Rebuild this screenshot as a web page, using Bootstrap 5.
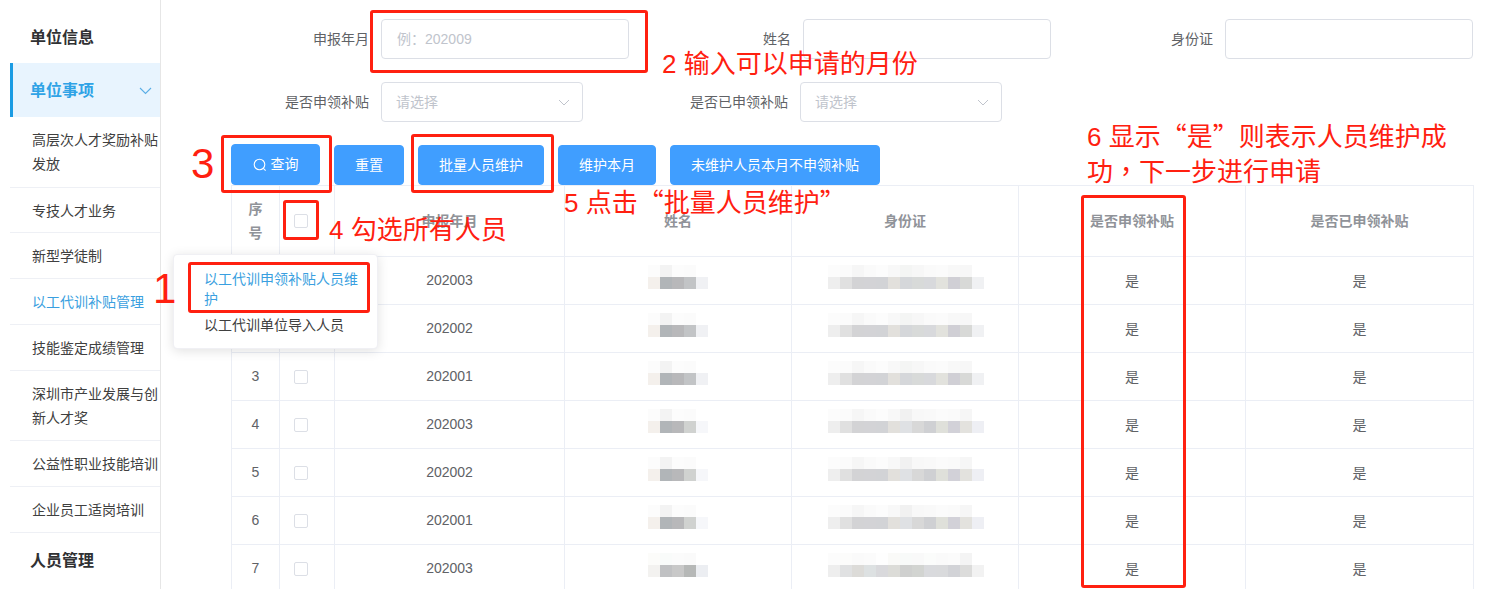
<!DOCTYPE html>
<html lang="zh-CN">
<head>
<meta charset="utf-8">
<title>以工代训申领补贴人员维护</title>
<link href="https://cdn.jsdelivr.net/npm/bootstrap@5.3.0/dist/css/bootstrap.min.css" rel="stylesheet">
<style>
html,body{height:589px;overflow:hidden}
body{font-family:"Liberation Sans","Noto Sans CJK SC",sans-serif;font-size:14px;color:#606266;background:#fff;position:relative}
.shell{height:589px}
.side{width:161px;flex:none;padding-left:10px;border-right:1px solid #e6e6e6}
.side-head{font-size:16px;font-weight:700;color:#303133;padding-left:20px;line-height:24px}
.side-head.first{height:63px;padding-top:26px}
.side-head.cur{height:54px;padding-top:2px;color:#2fa3e6;background:#e8f4fe;border-left:3px solid #1a9be3;padding-left:17px;padding-right:8px}
.side-head.last{padding-top:16px}
.side-sub{font-size:14px;line-height:24px;color:#404040;padding:11px 0 10px 22px;border-bottom:1px solid #eef0f5}
.side-sub.tallrow{padding-bottom:11px}
.side-sub.shortrow{padding-bottom:9px}
.side-sub.cur{color:#3a9fe0}
.work{flex:1;min-width:0;padding:19px 15px 0 50px}
.qgrid{display:grid;height:40px}
.qgrid.g1{grid-template-columns:170px 248px 174px 248px 174px 248px;margin-bottom:23px}
.qgrid.g2{grid-template-columns:170px 202px 217px 202px;margin-bottom:22px}
.qlabel{text-align:right;padding-right:12px;line-height:40px;color:#606266}
.qinput.form-control,.qinput.form-select{height:40px;font-size:14px;padding:0 15px;border:1px solid #dcdfe6;border-radius:4px;color:#606266;box-shadow:none}
.qinput::placeholder{color:#c0c4cc}
.qinput.form-select{padding-left:14px;color:#c0c4cc;background-image:url("data:image/svg+xml,%3Csvg xmlns='http://www.w3.org/2000/svg' viewBox='0 0 12 7'%3E%3Cpath d='M1 1l5 5 5-5' fill='none' stroke='%23c0c4cc'/%3E%3C/svg%3E");background-size:12px 7px;background-position:right 12px center}
.tools{margin-left:20px;gap:14px;height:41px}
.act.btn{--bs-btn-bg:#409eff;--bs-btn-border-color:#409eff;--bs-btn-color:#fff;--bs-btn-hover-bg:#409eff;--bs-btn-hover-border-color:#409eff;height:40px;font-size:14px;padding:0 20px;border-radius:4px;line-height:38px}
.act.tall{height:41px;width:89px;padding:0;line-height:39px}
.grid-wrap{margin-left:20px;width:1242px}
.gtable.table{table-layout:fixed;width:1242px;margin:0;--bs-border-color:#ebeef5;--bs-table-color:#606266;color:#606266}
.gtable th,.gtable td{text-align:center;vertical-align:middle;padding:0;border-color:#ebeef5}
.gtable th{height:71px;color:#909399;font-size:14px;font-weight:700;line-height:24px}
.gtable th.seq{padding:0 12px}
.gtable td{height:48px}
.gtable td.yn{padding-top:2px}
.gtable .tick-cell{line-height:0;text-align:left;padding-left:14px}
.tick.form-check-input{width:14px;height:14px;margin:0;border:1px solid #dcdfe6;border-radius:2px;display:inline-block;vertical-align:middle}
.name-blur,.id-blur{height:24px;margin:0 auto 8px;background-repeat:no-repeat;background-size:100% 12px;background-position:top,bottom}
.name-blur{width:60px;margin-left:83px;background-image:var(--t),var(--b);--t:linear-gradient(90deg,#fcfcfc 0 12px,#f3f3f3 0 24px,#fcfcfc 0 36px,#fbfbfb 0 48px,#fff 0)}
.id-blur{width:156px;margin-left:36px;background-image:var(--t),var(--b)}
.nb1{--b:linear-gradient(90deg,#f4f0ec 0 12px,#b1b5b8 0 24px,#b8b8ba 0 36px,#c2c4c6 0 48px,#f0f1f4 0)}
.nb2{--b:linear-gradient(90deg,#f4f0ec 0 12px,#b1b5b8 0 24px,#b8b8ba 0 36px,#d0d2d0 0 48px,#f6f7fa 0)}
.nb3{--t:linear-gradient(90deg,#fcfcfa 0 12px,#f9fbfa 0 24px,#fbfbfb 0 36px,#fafafa 0 48px,#fff 0);--b:linear-gradient(90deg,#f3f2f0 0 12px,#c0c1c3 0 24px,#c8c8c8 0 36px,#b6b8b7 0 48px,#eceef2 0)}
.ib1{--t:linear-gradient(90deg,#fcfcfc 0 12px,#fbfbfb 0 24px,#f6f6f6 0 36px,#fafafa 0 48px,#fcfcfc 0 60px,#f8f8f8 0 72px,#f4f5f4 0 84px,#f7f7f7 0 96px,#fafafa 0 108px,#fbfbfb 0 120px,#f8f8f8 0 132px,#f7f7f7 0 144px,#fff 0);--b:linear-gradient(90deg,#eee 0 12px,#e0e0e0 0 24px,#d3d3d5 0 36px,#d3d3d6 0 48px,#d2d3d6 0 60px,#e2e0dc 0 72px,#d5d7da 0 84px,#d8dad9 0 96px,#d8d9dc 0 108px,#e2e2dd 0 120px,#d0cfd5 0 132px,#d8d9d7 0 144px,#f0f1f3 0)}
.ib2{--t:linear-gradient(90deg,#fcfcfc 0 12px,#fbfbfb 0 24px,#f6f6f6 0 36px,#fafafa 0 48px,#fcfcfc 0 60px,#f8f8f8 0 72px,#f1f1f1 0 84px,#f8f8f8 0 96px,#f9f9f9 0 108px,#fbfbfb 0 120px,#fafafa 0 132px,#f6f6f6 0 144px,#fff 0);--b:linear-gradient(90deg,#eee 0 12px,#e0e0e0 0 24px,#d3d3d5 0 36px,#d3d3d6 0 48px,#d2d3d6 0 60px,#e2e0dc 0 72px,#dfe1e4 0 84px,#d8d8d8 0 96px,#cfd0d3 0 108px,#dfe0da 0 120px,#d2d1d8 0 132px,#e3e2de 0 144px,#eeeff4 0)}
.ib3{--t:linear-gradient(90deg,#fcfcfc 0 12px,#fcfcfb 0 24px,#fafafa 0 36px,#fbfbfb 0 48px,#fefefe 0 60px,#fafaf8 0 72px,#f8faf9 0 84px,#f9f9f9 0 96px,#fbfcfb 0 108px,#fafafa 0 120px,#fbfbfb 0 132px,#f4f4f4 0 144px,#fff 0);--b:linear-gradient(90deg,#eee 0 12px,#e0e1e2 0 24px,#dcdbd8 0 36px,#dde1e2 0 48px,#d9d9dc 0 60px,#dcdcd8 0 72px,#cfd0cf 0 84px,#d2d4d1 0 96px,#d9dadd 0 108px,#d9dadc 0 120px,#d2d3d7 0 132px,#dcdcdb 0 144px,#f2f2f2 0)}
.pop.dropdown-menu{position:absolute;display:block;left:173px;top:254px;width:205px;height:95px;min-width:0;padding:14px 0 0;margin:0;border:1px solid #f0f0f4;border-radius:4px;box-shadow:0 2px 12px rgba(0,0,0,.12);z-index:5}
.pop .dropdown-item{white-space:normal;padding:0 16px 0 31px;font-size:14px;line-height:20px;color:#404040}
.pop .dropdown-item.cur{color:#3a9fe0;margin-bottom:6px;background:none}
.pop li{margin-left:-1px}
.redbox{position:absolute;border:3px solid #ff2010;border-radius:3px;z-index:6;pointer-events:none}
.rb1{left:370px;top:10px;width:278px;height:63px}
.rb2{left:221px;top:135px;width:111px;height:58px}
.rb3{left:411px;top:134px;width:143px;height:59px}
.rb4{left:283px;top:200px;width:36px;height:40px}
.rb5{left:188px;top:262px;width:182px;height:51px}
.rb6{left:1081px;top:195px;width:105px;height:393px}
.note{position:absolute;color:#ff2010;font-size:26px;line-height:36px;white-space:nowrap;z-index:7}
.n2{left:662px;top:46px}
.n3{left:191px;top:139px;font-size:42px;line-height:50px}
.n1{left:153px;top:264px;font-size:42px;line-height:50px}
.n4{left:329px;top:212px}
.n5{left:564px;top:183px}
.n6{left:1087px;top:117px}
.n7{left:1087px;top:152px}
.cjkpunct{font-family:"Noto Sans CJK SC",sans-serif}
.tcform{font-family:"Noto Sans CJK TC",sans-serif}
</style>
</head>
<body>
<div class="shell d-flex">
  <aside class="side">
    <div class="side-head first">单位信息</div>
    <div class="side-head cur d-flex justify-content-between align-items-center">
      <span>单位事项</span>
      <svg width="13" height="8" viewBox="0 0 13 8" aria-hidden="true"><path d="M1 1l5.5 5.5L12 1" fill="none" stroke="#5aaee6" stroke-width="1.1"/></svg>
    </div>
    <div class="side-sub tallrow">高层次人才奖励补贴发放</div>
    <div class="side-sub shortrow">专技人才业务</div>
    <div class="side-sub">新型学徒制</div>
    <div class="side-sub cur">以工代训补贴管理</div>
    <div class="side-sub">技能鉴定成绩管理</div>
    <div class="side-sub">深圳市产业发展与创新人才奖</div>
    <div class="side-sub">公益性职业技能培训</div>
    <div class="side-sub">企业员工适岗培训</div>
    <div class="side-head last">人员管理</div>
  </aside>
  <main class="work">
    <div class="qgrid g1">
      <label class="qlabel">申报年月</label><input class="qinput form-control" placeholder="例：202009">
      <label class="qlabel">姓名</label><input class="qinput form-control">
      <label class="qlabel">身份证</label><input class="qinput form-control">
    </div>
    <div class="qgrid g2">
      <label class="qlabel">是否申领补贴</label><select class="qinput form-select"><option>请选择</option></select>
      <label class="qlabel">是否已申领补贴</label><select class="qinput form-select"><option>请选择</option></select>
    </div>
    <div class="tools d-flex align-items-end">
      <button class="act tall btn" type="button"><svg width="14" height="14" viewBox="0 0 14 14" aria-hidden="true" class="me-1"><circle cx="6.5" cy="6.5" r="5.3" fill="none" stroke="#fff" stroke-width="1.1"/><path d="M10.4 10.4l2.2 2.2" stroke="#fff" stroke-width="1.1"/></svg>查询</button>
      <button class="act btn" type="button">重置</button>
      <button class="act btn" type="button">批量人员维护</button>
      <button class="act btn" type="button">维护本月</button>
      <button class="act btn" type="button">未维护人员本月不申领补贴</button>
    </div>
    <div class="grid-wrap">
      <table class="gtable table table-bordered">
        <colgroup><col style="width:48px"><col style="width:55px"><col style="width:230px"><col style="width:227px"><col style="width:227px"><col style="width:227px"><col style="width:228px"></colgroup>
        <thead><tr><th class="seq">序号</th><th class="tick-cell"><input class="tick form-check-input" type="checkbox" aria-label="全选"></th><th>申报年月</th><th>姓名</th><th>身份证</th><th>是否申领补贴</th><th>是否已申领补贴</th></tr></thead>
        <tbody>
          <tr><td>1</td><td class="tick-cell"><input class="tick form-check-input" type="checkbox"></td><td>202003</td><td><div class="name-blur nb1"></div></td><td><div class="id-blur ib1"></div></td><td class="yn">是</td><td class="yn">是</td></tr>
          <tr><td>2</td><td class="tick-cell"><input class="tick form-check-input" type="checkbox"></td><td>202002</td><td><div class="name-blur nb1"></div></td><td><div class="id-blur ib1"></div></td><td class="yn">是</td><td class="yn">是</td></tr>
          <tr><td>3</td><td class="tick-cell"><input class="tick form-check-input" type="checkbox"></td><td>202001</td><td><div class="name-blur nb1"></div></td><td><div class="id-blur ib1"></div></td><td class="yn">是</td><td class="yn">是</td></tr>
          <tr><td>4</td><td class="tick-cell"><input class="tick form-check-input" type="checkbox"></td><td>202003</td><td><div class="name-blur nb2"></div></td><td><div class="id-blur ib2"></div></td><td class="yn">是</td><td class="yn">是</td></tr>
          <tr><td>5</td><td class="tick-cell"><input class="tick form-check-input" type="checkbox"></td><td>202002</td><td><div class="name-blur nb2"></div></td><td><div class="id-blur ib2"></div></td><td class="yn">是</td><td class="yn">是</td></tr>
          <tr><td>6</td><td class="tick-cell"><input class="tick form-check-input" type="checkbox"></td><td>202001</td><td><div class="name-blur nb2"></div></td><td><div class="id-blur ib2"></div></td><td class="yn">是</td><td class="yn">是</td></tr>
          <tr><td>7</td><td class="tick-cell"><input class="tick form-check-input" type="checkbox"></td><td>202003</td><td><div class="name-blur nb3"></div></td><td><div class="id-blur ib3"></div></td><td class="yn">是</td><td class="yn">是</td></tr>
        </tbody>
      </table>
    </div>
  </main>
</div>

<ul class="pop dropdown-menu list-unstyled">
  <li><a class="dropdown-item cur" href="#">以工代训申领补贴人员维护</a></li>
  <li><a class="dropdown-item" href="#">以工代训单位导入人员</a></li>
</ul>

<div class="redbox rb1"></div><div class="redbox rb2"></div><div class="redbox rb3"></div><div class="redbox rb4"></div><div class="redbox rb5"></div><div class="redbox rb6"></div>
<div class="note n2">2 输入可以申请的月份</div>
<div class="note n3">3</div>
<div class="note n1">1</div>
<div class="note n4">4 勾选所有人员</div>
<div class="note n5">5 点击<span class="cjkpunct">“</span>批量人员维护<span class="cjkpunct">”</span></div>
<div class="note n6">6 显示<span class="cjkpunct">“</span>是<span class="cjkpunct">”</span>则表示人员维护成</div>
<div class="note n7">功<span class="tcform" lang="zh-TW">，</span>下一步进行申请</div>
<script src="https://cdn.jsdelivr.net/npm/bootstrap@5.3.0/dist/js/bootstrap.bundle.min.js"></script>
</body>
</html>
